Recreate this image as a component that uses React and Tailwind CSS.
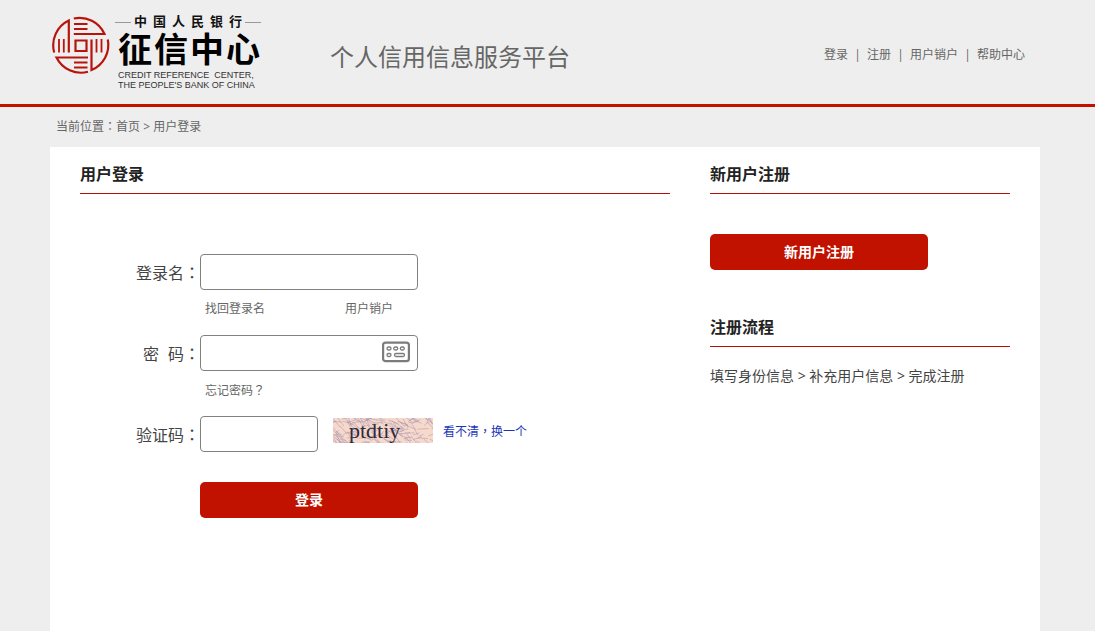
function Punct({ children }) {
  return <span className="font-['Noto_Sans_CJK_TC','Noto_Sans_CJK_SC',sans-serif]">{children}</span>;
}

function Seal() {
  return (
    <svg viewBox="0 0 60 60" className="h-[60px] w-[60px]" fill="none" stroke="#b8140c" strokeWidth="2.2" aria-hidden="true">
      <path d="M3.2 37.5A27.3 27.3 0 0 1 17.8 5.600V37.500" />
      <path d="M22.800 3.500A27.300 27.300 0 0 1 53.500 19H22.800" />
      <path d="M56.800 24.500A27.300 27.300 0 0 1 40.500 55V24.500" />
      <path d="M37 56.800A27.300 27.300 0 0 1 5.500 42.500H37" />
      <path d="M8 24v13.500M12.800 24v13.500M45.500 24v13.500M50.500 24v13.500M23 9h13.500M23 14h13.500M23 47.500h13.500M23 52.500h13.500" strokeWidth="1.8" />
      <path d="M24.500 25.500h11v10.500h-11z" />
    </svg>
  );
}

function Logo() {
  return (
    <a href="#" className="flex w-[215px] shrink-0 gap-1 pt-[14px] font-['Liberation_Sans','Noto_Sans_CJK_SC',sans-serif]">
      <span className="ml-px shrink-0 pt-px">
        <Seal />
      </span>
      <span className="flex flex-col text-[#111]">
        <span className="flex items-center gap-[3px]">
          <span className="h-px w-4 bg-[#999]" />
          <span className="flex gap-[6px] text-[13px] leading-4 font-bold">
            <span>中</span><span>国</span><span>人</span><span>民</span><span>银</span><span>行</span>
          </span>
          <span className="h-px w-4 bg-[#999]" />
        </span>
        <span className="ml-[3px] flex gap-[2px] text-[34px] leading-10 font-bold text-black">
          <span>征</span><span>信</span><span>中</span><span>心</span>
        </span>
        <span className="ml-[3px] flex flex-col text-[9px] leading-[10px] whitespace-nowrap text-[#333]">
          <span>CREDIT REFERENCE&nbsp; CENTER,</span>
          <span>THE PEOPLE'S BANK OF CHINA</span>
        </span>
      </span>
    </a>
  );
}

function KeyboardIcon() {
  return (
    <svg viewBox="0 0 28 22" className="h-[22px] w-7" fill="none" stroke="#7b7b7b" aria-hidden="true">
      <rect x="1.100" y="1.600" width="25.800" height="18.600" rx="2.500" strokeWidth="2.200" />
      <g strokeWidth="1.300">
        <rect x="5" y="6" width="4" height="3" rx="1.500" />
        <rect x="11.700" y="6" width="4" height="3" rx="1.500" />
        <rect x="18.300" y="6" width="4" height="3" rx="1.500" />
        <rect x="5" y="12.500" width="4" height="3" rx="1.500" />
        <rect x="12.500" y="12.500" width="10" height="3" rx="1.500" />
      </g>
    </svg>
  );
}

const noise = (n) => {
  const v = Math.sin(n * 127.1 + 31.7) * 43758.5453;
  return v - Math.floor(v);
};

const scratches = Array.from({ length: 170 }, (_, i) => {
  const x = noise(i) * 104 - 4;
  const y = noise(i + 500) * 29 - 4;
  const dx = 3 + noise(i + 900) * 8;
  const dy = (noise(i + 1300) - 0.3) * 16;
  return `M${x.toFixed(1)} ${y.toFixed(1)}l${dx.toFixed(1)} ${dy.toFixed(1)}`;
}).join("");

function Captcha() {
  return (
    <svg viewBox="0 0 100 25" className="h-[25px] w-[100px]" role="img" aria-label="验证码">
      <rect width="100" height="25" fill="#f7d9cc" />
      <path d={scratches} stroke="#a590ab" strokeWidth="0.700" fill="none" opacity="0.700" />
      <text x="16" y="20" fontSize="22" fill="#302a3a" fontFamily="'Liberation Serif', serif">ptdtiy</text>
    </svg>
  );
}

function SectionTitle({ children }) {
  return (
    <h2 className="border-b border-[#b81004] pt-4 pb-2 text-base leading-[22px] font-bold text-[#222]">{children}</h2>
  );
}

const links = ["登录", "注册", "用户销户", "帮助中心"];
const field = "h-9 rounded border border-[#808080] bg-white px-2 text-base outline-none";
const label = "w-[120px] shrink-0 pt-[2px] text-right text-base leading-8 whitespace-nowrap text-[#444]";
const button = "h-9 w-[218px] rounded-[5px] bg-[#c11200] text-sm font-bold text-white";

export default function App() {
  return (
    <div className="flex min-h-screen flex-col bg-[#eee] text-xs text-[#666] font-['Open_Sans','Noto_Sans_CJK_SC',sans-serif]">
      <header className="flex h-[107px] border-b-[3px] border-[#c11200] pr-[70px] pl-[50px]">
        <Logo />
        <h1 className="mt-10 ml-[65px] text-2xl leading-[34px] whitespace-nowrap">个人信用信息服务平台</h1>
        <nav className="mt-[45px] ml-auto flex h-5 leading-5 whitespace-nowrap">
          {links.map((text, i) => (
            <span key={text} className="flex">
              {i > 0 && <span className="w-[19px] text-center">|</span>}
              <a href="#">{text}</a>
            </span>
          ))}
        </nav>
      </header>
      <main className="flex flex-1 flex-col pr-[55px] pl-[50px]">
        <div className="h-10 pl-[6px] leading-[38px]">
          当前位置<Punct>：</Punct><a href="#">首页</a> &gt; 用户登录
        </div>
        <div className="flex flex-1 gap-10 bg-white px-[30px]">
          <section className="min-w-0 flex-1">
            <SectionTitle>用户登录</SectionTitle>
            <form className="pt-[60px]" onSubmit={(e) => e.preventDefault()}>
              <div className="flex">
                <label htmlFor="user" className={label}>登录名<Punct>：</Punct></label>
                <input id="user" type="text" className={`${field} w-[218px]`} />
              </div>
              <div className="flex h-[45px] gap-20 pl-[125px] leading-[38px]">
                <a href="#">找回登录名</a>
                <a href="#">用户销户</a>
              </div>
              <div className="flex">
                <label htmlFor="password" className={label}>密<span className="inline-block w-[9px]" />码<Punct>：</Punct></label>
                <div className="relative">
                  <input id="password" type="password" className={`${field} w-[218px] pr-10`} />
                  <button type="button" aria-label="软键盘" className="absolute top-[6px] right-2">
                    <KeyboardIcon />
                  </button>
                </div>
              </div>
              <div className="flex h-[45px] pl-[125px] leading-[38px]">
                <a href="#">忘记密码<Punct>？</Punct></a>
              </div>
              <div className="flex">
                <label htmlFor="code" className={label}>验证码<Punct>：</Punct></label>
                <input id="code" type="text" className={`${field} w-[118px]`} />
                <span className="mt-[2px] ml-[15px] shrink-0"><Captcha /></span>
                <a href="#" className="ml-[10px] leading-[30px] whitespace-nowrap text-[#1a36b8]">
                  看不清<Punct>，</Punct>换一个
                </a>
              </div>
              <button type="submit" className={`${button} mt-[30px] ml-[120px]`}>登录</button>
            </form>
          </section>
          <aside className="w-[300px] shrink-0">
            <SectionTitle>新用户注册</SectionTitle>
            <button type="button" className={`${button} mt-10 mb-[30px] block`}>新用户注册</button>
            <SectionTitle>注册流程</SectionTitle>
            <p className="mt-5 text-sm leading-[18px] text-[#444]">填写身份信息 &gt; 补充用户信息 &gt; 完成注册</p>
          </aside>
        </div>
      </main>
    </div>
  );
}
